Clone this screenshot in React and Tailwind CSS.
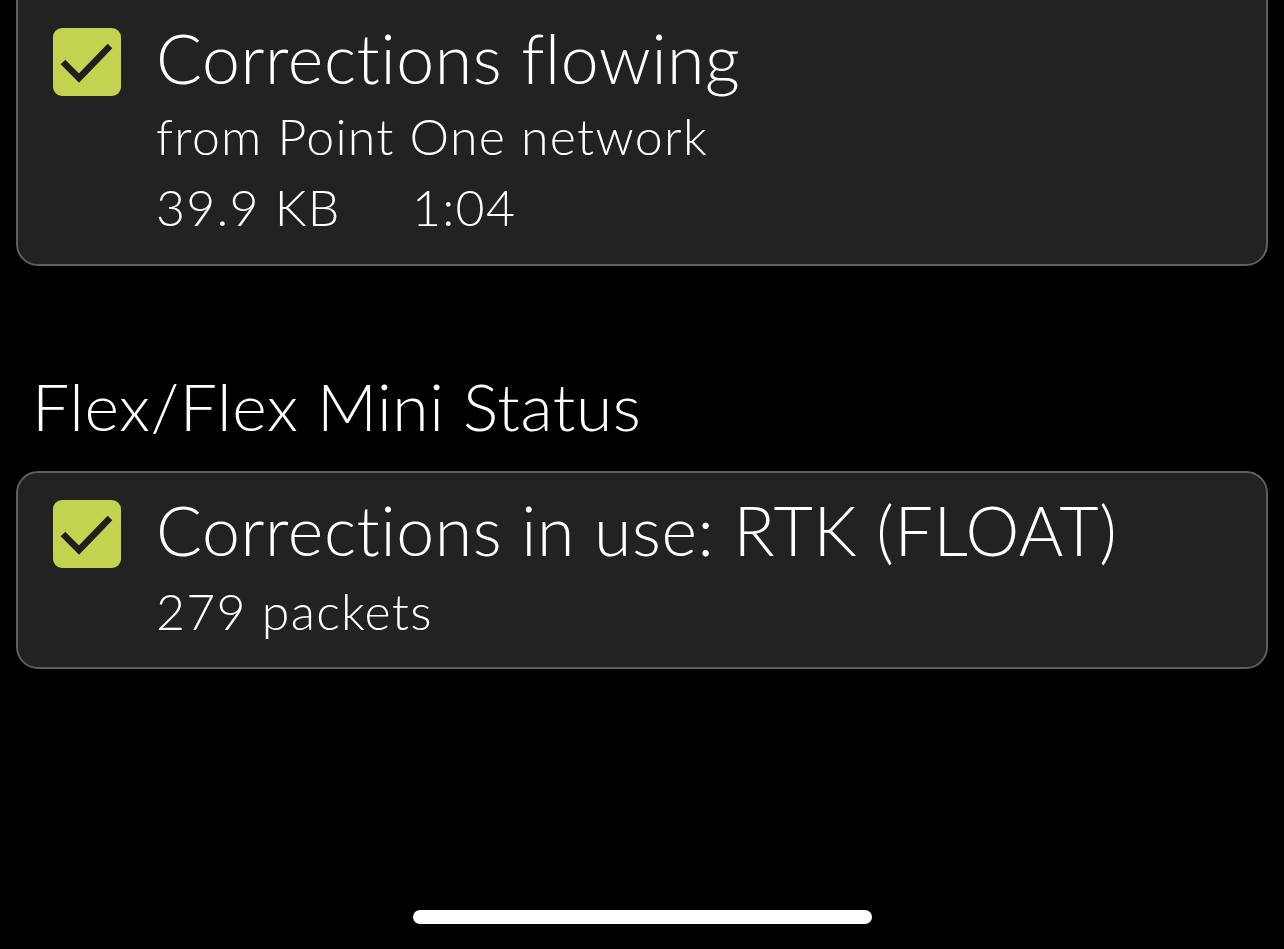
import React from "react";

const font = { fontFamily: "Lato, 'Noto Sans', sans-serif" };

const CheckBox = () => (
  <div className="w-[68px] h-[68px] shrink-0 rounded-[9px] bg-[#c3d34f] flex items-center justify-center">
    <svg width="68" height="68" viewBox="0 0 68 68">
      <path d="M10 34 L26 50 L57 18" fill="none" stroke="#1f1f1f" strokeWidth="6.5" strokeLinecap="butt" strokeLinejoin="miter" />
    </svg>
  </div>
);

const StatusCard = ({ title, lines, className = "", gap = "mt-[7px]" }) => (
  <div className={`mx-[16px] border-2 border-[#5e5e5e] bg-[#222222] rounded-[22px] flex items-start pl-[35px] ${className}`}>
    <CheckBox />
    <div className="ml-[35px] flex flex-col text-white font-light [font-variant-ligatures:none]">
      <div className="text-[68px] leading-[72px] tracking-[0.6px] -mt-[6px]">{title}</div>
      <div className={`flex flex-col ${gap}`}>
        {lines.map((l, i) => (
          <div key={i} className="text-[50px] leading-[71px] tracking-[1.3px]">
            {l}
          </div>
        ))}
      </div>
    </div>
  </div>
);

export default function App() {
  return (
    <div className="bg-black w-[1284px] h-[949px] overflow-hidden flex flex-col" style={font}>
      <StatusCard
        className="-mt-[30px] pt-[56px] pb-[21px]"
        title="Corrections flowing"
        lines={[
          "from Point One network",
          <span key="s" className="flex">
            <span className="w-[256px]">39.9 KB</span>
            <span>1:04</span>
          </span>,
        ]}
      />
      <div className="mt-[104px] ml-[32px] text-white font-light [font-variant-ligatures:none] text-[66px] leading-[72px] tracking-[0.6px]">
        Flex/Flex Mini Status
      </div>
      <StatusCard
        className="mt-[29px] pt-[27px] pb-[20px]"
        gap="mt-[10px]"
        title="Corrections in use: RTK (FLOAT)"
        lines={["279 packets"]}
      />
      <div className="mt-auto mb-[25px] self-center w-[459px] h-[14px] rounded-full bg-white" />
    </div>
  );
}
